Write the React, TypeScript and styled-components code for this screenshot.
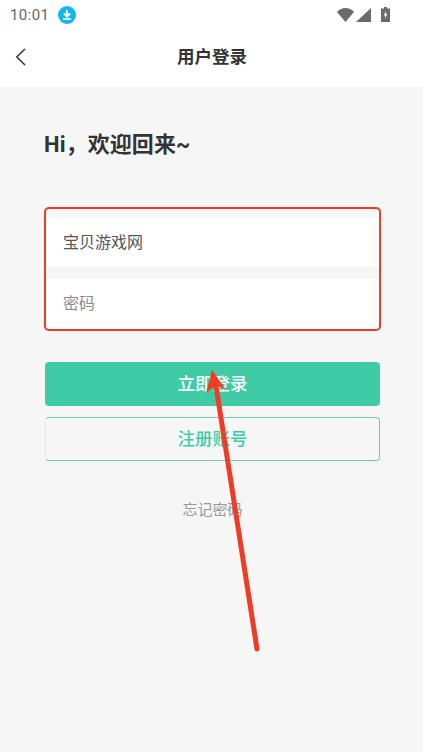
import React from 'react';
import styled, { createGlobalStyle } from 'styled-components';

const FONT = '"Roboto", "Noto Sans CJK SC", sans-serif';

const GlobalStyle = createGlobalStyle`
  html, body {
    margin: 0;
    padding: 0;
    background: #f6f6f6;
  }
  * {
    box-sizing: border-box;
  }
`;

const Page = styled.div`
  position: relative;
  width: 423px;
  height: 752px;
  overflow: hidden;
  background: #f6f6f6;
  font-family: ${FONT};
`;

const TopArea = styled.div`
  height: 87px;
  background: #fff;
`;

const StatusBar = styled.div`
  display: flex;
  align-items: center;
  justify-content: space-between;
  height: 29px;
  padding: 0 33px 0 10px;
`;

const StatusLeft = styled.div`
  display: flex;
  align-items: center;
  gap: 9px;
`;

const Clock = styled.span`
  font-size: 15px;
  color: #666;
  letter-spacing: 0.4px;
`;

const StatusRight = styled.div`
  display: flex;
  align-items: center;
  gap: 2px;
`;

const BatteryIcon = styled.svg`
  margin-left: 8px;
`;

const NavBar = styled.div`
  position: relative;
  display: flex;
  align-items: center;
  justify-content: center;
  height: 56px;
  padding: 0 0 3px 1px;
`;

const BackButton = styled.div`
  position: absolute;
  left: 14px;
  top: 18px;
  display: flex;
`;

const NavTitle = styled.h1`
  margin: 0;
  font-size: 17.5px;
  font-weight: 700;
  color: #333;
`;

const Content = styled.div`
  display: flex;
  flex-direction: column;
  padding: 43px 43px 0 45px;
`;

const Greeting = styled.h2`
  margin: 0 0 0 -1px;
  height: 30px;
  font-size: 22px;
  line-height: 30px;
  letter-spacing: 0.1px;
  font-weight: 700;
  color: #333;
`;

const Form = styled.div`
  position: relative;
  display: flex;
  flex-direction: column;
  gap: 12px;
  margin-top: 48px;
  padding-top: 10px;
`;

const Highlight = styled.div`
  position: absolute;
  top: -1px;
  left: -1px;
  right: -1px;
  bottom: -2px;
  border: 2px solid #ee3c26;
  border-radius: 5px;
  pointer-events: none;
`;

const Field = styled.div<{ $placeholder?: boolean }>`
  display: flex;
  align-items: center;
  height: ${(p) => (p.$placeholder ? '50px' : '49px')};
  padding-left: 18px;
  padding-bottom: ${(p) => (p.$placeholder ? '5px' : '3px')};
  background: #fff;
  border-radius: 4px;
  font-size: 16px;
  color: ${(p) => (p.$placeholder ? '#8a8a8a' : '#555')};
`;

const Actions = styled.div`
  display: flex;
  flex-direction: column;
  gap: 11px;
  margin-top: 33px;
`;

const Button = styled.div<{ $outline?: boolean }>`
  display: flex;
  align-items: center;
  justify-content: center;
  height: 44px;
  padding-bottom: ${(p) => (p.$outline ? '3px' : '3px')};
  border-radius: 4px;
  font-size: 17.5px;
  font-weight: 500;
  color: ${(p) => (p.$outline ? '#3ecba5' : '#fff')};
  background: ${(p) => (p.$outline ? 'transparent' : '#3ecba5')};
  border: ${(p) => (p.$outline ? '1px solid #6dcfb1' : 'none')};
  border-left-color: ${(p) => (p.$outline ? '#d5efe6' : 'transparent')};
`;

const Forgot = styled.div`
  margin-top: 39px;
  text-align: center;
  font-size: 15px;
  line-height: 20px;
  color: #999;
`;

const ArrowOverlay = styled.svg`
  position: absolute;
  left: 0;
  top: 0;
  pointer-events: none;
`;

const App: React.FC = () => {
  return (
    <Page>
      <GlobalStyle />
      <TopArea>
        <StatusBar>
          <StatusLeft>
            <Clock>10:01</Clock>
            <svg width="18" height="18" viewBox="0 0 18 18">
              <circle cx="9" cy="9" r="9" fill="#12b5f5" />
              <path d="M9 4v6M6 7.500 9 10.500 12 7.500" fill="none" stroke="#fff" strokeWidth="2" />
              <path d="M5 13h8" stroke="#fff" strokeWidth="1.600" />
            </svg>
          </StatusLeft>
          <StatusRight>
            <svg width="17" height="14" viewBox="0 0 17 14">
              <path d="M0 4C2.300 1.500 5.300 0 8.500 0S14.700 1.500 17 4L8.500 14Z" fill="#6b6b6b" />
            </svg>
            <svg width="15" height="14" viewBox="0 0 15 14">
              <path d="M0 14 15 0v14Z" fill="#6b6b6b" />
            </svg>
            <BatteryIcon width="9" height="15" viewBox="0 0 9 15">
              <path d="M3 0h3v1.500h3V15H0V1.500h3Z" fill="#6b6b6b" />
              <path d="M5 4 2.800 8.500h1.500L3.800 12 6.300 7H4.800Z" fill="#fff" />
            </BatteryIcon>
          </StatusRight>
        </StatusBar>
        <NavBar>
          <BackButton>
            <svg width="14" height="20" viewBox="0 0 14 20">
              <path d="M11 2 2.800 10 11 18" fill="none" stroke="#333" strokeWidth="1.500" />
            </svg>
          </BackButton>
          <NavTitle>用户登录</NavTitle>
        </NavBar>
      </TopArea>
      <Content>
        <Greeting>Hi，欢迎回来~</Greeting>
        <Form>
          <Field>宝贝游戏网</Field>
          <Field $placeholder>密码</Field>
          <Highlight />
        </Form>
        <Actions>
          <Button>立即登录</Button>
          <Button $outline>注册账号</Button>
        </Actions>
        <Forgot>忘记密码</Forgot>
      </Content>
      <ArrowOverlay width="423" height="752" viewBox="0 0 423 752">
        <path d="M257 649 216 386" stroke="#ee3c26" strokeWidth="5" strokeLinecap="round" fill="none" />
        <path d="M212 370 206 393 216 385 226 390Z" fill="#ee3c26" />
      </ArrowOverlay>
    </Page>
  );
};

export default App;
